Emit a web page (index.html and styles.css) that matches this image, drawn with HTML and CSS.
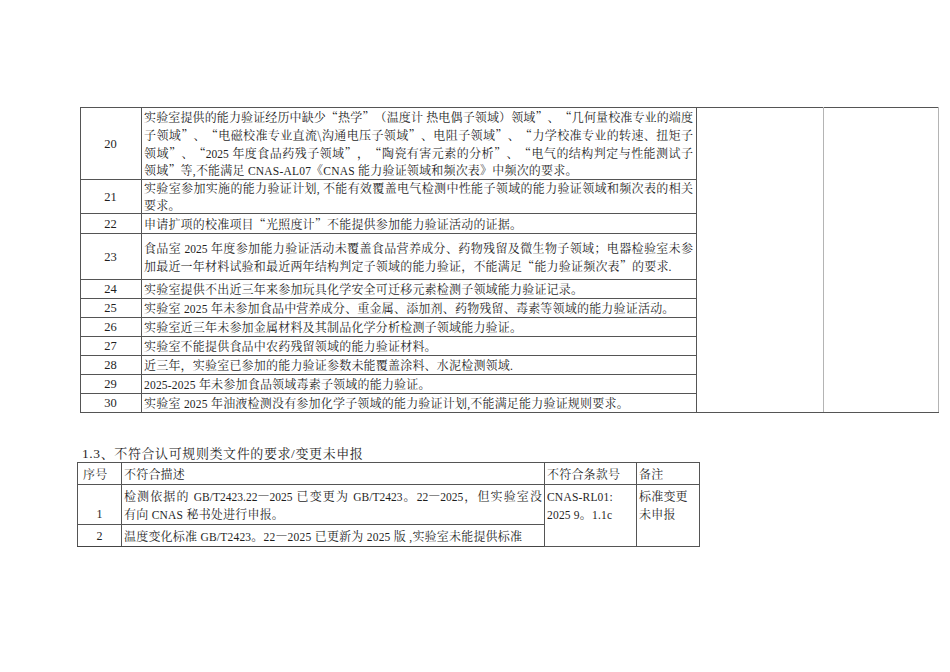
FILE: index.html
```html
<!DOCTYPE html>
<html lang="zh-CN">
<head>
<meta charset="utf-8">
<title>能力验证不符合项</title>
<link rel="stylesheet" href="styles.css">
</head>
<body>
<div class="page">
  <table class="t1">
    <colgroup>
      <col class="w-num"><col class="w-desc"><col class="w-c3"><col class="w-c4">
    </colgroup>
    <tr class="r20">
      <td class="num">20</td>
      <td class="desc"><span class="jl">实验室提供的能力验证经历中缺少“热学”（温度计 热电偶子领域）领域”、“几何量校准专业的端度</span><span class="jl">子领域”、“电磁校准专业直流\沟通电压子领域”、电阻子领域”、“力学校准专业的转速、扭矩子</span><span class="jl">领域”、“<span class="en">2025</span> 年度食品药残子领域”，“陶瓷有害元素的分析”、“电气的结构判定与性能测试子</span><span class="ln">领域”等<span class="en">,</span>不能满足 <span class="en">CNAS-AL07</span>《<span class="en">CNAS</span> 能力验证领域和频次表》中频次的要求。</span></td>
      <td class="c3" rowspan="11"></td>
      <td class="c4" rowspan="11"></td>
    </tr>
    <tr class="r21">
      <td class="num">21</td>
      <td class="desc"><span class="jl">实验室参加实施的能力验证计划<span class="en">, </span>不能有效覆盖电气检测中性能子领域的能力验证领域和频次表的相关</span><span class="ln">要求。</span></td>
    </tr>
    <tr class="r22">
      <td class="num">22</td>
      <td class="desc"><span class="ln">申请扩项的校准项目“光照度计”不能提供参加能力验证活动的证据。</span></td>
    </tr>
    <tr class="r23">
      <td class="num">23</td>
      <td class="desc"><span class="jl">食品室 <span class="en">2025</span> 年度参加能力验证活动未覆盖食品营养成分、药物残留及微生物子领域；电器检验室未参</span><span class="ln">加最近一年材料试验和最近两年结构判定子领域的能力验证，不能满足“能力验证频次表”的要求<span class="en">.</span></span></td>
    </tr>
    <tr class="r1">
      <td class="num">24</td>
      <td class="desc"><span class="ln">实验室提供不出近三年来参加玩具化学安全可迁移元素检测子领域能力验证记录。</span></td>
    </tr>
    <tr class="r1">
      <td class="num">25</td>
      <td class="desc"><span class="ln">实验室 <span class="en">2025</span> 年未参加食品中营养成分、重金属、添加剂、药物残留、毒素等领域的能力验证活动。</span></td>
    </tr>
    <tr class="r1">
      <td class="num">26</td>
      <td class="desc"><span class="ln">实验室近三年未参加金属材料及其制品化学分析检测子领域能力验证。</span></td>
    </tr>
    <tr class="r1">
      <td class="num">27</td>
      <td class="desc"><span class="ln">实验室不能提供食品中农药残留领域的能力验证材料。</span></td>
    </tr>
    <tr class="r1">
      <td class="num">28</td>
      <td class="desc"><span class="ln">近三年，实验室已参加的能力验证参数未能覆盖涂料、水泥检测领域<span class="en">.</span></span></td>
    </tr>
    <tr class="r1">
      <td class="num">29</td>
      <td class="desc"><span class="ln"><span class="en">2025-2025</span> 年未参加食品领域毒素子领域的能力验证。</span></td>
    </tr>
    <tr class="r1">
      <td class="num">30</td>
      <td class="desc"><span class="ln">实验室 <span class="en">2025</span> 年油液检测没有参加化学子领域的能力验证计划<span class="en">,</span>不能满足能力验证规则要求。</span></td>
    </tr>
  </table>

  <h2 class="section"><span class="en">1.3</span>、不符合认可规则类文件的要求<span class="en">/</span>变更未申报</h2>

  <table class="t2">
    <colgroup>
      <col class="w2-num"><col class="w2-desc"><col class="w2-c3"><col class="w2-c4">
    </colgroup>
    <tr class="h">
      <td class="hnum"><span class="ln">序号</span></td>
      <td><span class="ln">不符合描述</span></td>
      <td><span class="ln">不符合条款号</span></td>
      <td><span class="ln">备注</span></td>
    </tr>
    <tr class="r2a">
      <td class="num2"><span class="ln">1</span></td>
      <td><span class="jl">检测依据的 <span class="en">GB/T2423.22</span>—<span class="en">2025</span> 已变更为 <span class="en">GB/T2423</span>。<span class="en">22</span>—<span class="en">2025</span>，但实验室没</span><span class="ln">有向 <span class="en">CNAS</span> 秘书处进行申报。</span></td>
      <td class="top" rowspan="2"><span class="ln"><span class="en">CNAS-RL01:</span></span><span class="ln"><span class="en">2025 9</span>。<span class="en">1.1c</span></span></td>
      <td class="top" rowspan="2"><span class="ln">标准变更</span><span class="ln">未申报</span></td>
    </tr>
    <tr class="r2b">
      <td class="num2"><span class="ln">2</span></td>
      <td><span class="ln">温度变化标准 <span class="en">GB/T2423</span>。<span class="en">22</span>—<span class="en">2025</span> 已更新为 <span class="en">2025</span> 版 <span class="en">,</span>实验室未能提供标准</span></td>
    </tr>
  </table>
</div>
</body>
</html>
```

FILE: styles.css
```css
html, body {
  margin: 0;
  background: #ffffff;
}

body {
  color: #1f1f1f;
  font-family: "Noto Serif CJK SC", "Noto Sans CJK SC", serif;
  font-size: 12px;
}

.page {
  padding: 107px 0 0 77px;
}

table {
  border-collapse: collapse;
  table-layout: fixed;
}

td {
  border: 1px solid #555555;
  padding: 0 3px 0 2px;
  line-height: 18px;
  vertical-align: middle;
}

.en {
  font-family: "Liberation Serif", serif;
  font-size: 11.5px;
}

.jl, .ln {
  display: block;
  height: 18px;
  line-height: 18px;
  overflow: visible;
  white-space: nowrap;
}

.ln {
  letter-spacing: 0.2px;
}

.jl {
  text-align: justify;
  text-align-last: justify;
}

/* table 1 */
.t1 {
  width: 858px;
  margin-left: 3px;
}

.w-num { width: 61px; }
.w-desc { width: 555px; }
.w-c3 { width: 127px; }
.w-c4 { width: 115px; }

.num {
  text-align: center;
  font-family: "Liberation Serif", serif;
  font-size: 12.5px;
}

.c3 {
  border-right-color: #b4b4b4;
}

.c4 {
  border-left-color: #b4b4b4;
  border-right-color: #b4b4b4;
}

.r20 .jl, .r20 .ln { height: 17.75px; line-height: 17.75px; }
.r21 .jl, .r21 .ln { height: 16.5px; line-height: 16.5px; }
.r22 .ln { height: 19px; line-height: 19px; }
.r23 .desc { padding-top: 5px; padding-bottom: 4px; }

/* section heading */
.section {
  margin: 31px 0 0 0;
  padding-left: 5px;
  height: 18px;
  font-size: 13px;
  font-weight: normal;
  line-height: 18px;
  letter-spacing: 0.6px;
}

.section .en {
  font-size: 13.5px;
  letter-spacing: 0.6px;
}

/* table 2 */
.t2 {
  width: 622px;
}

.w2-num { width: 44px; }
.w2-desc { width: 423px; }
.w2-c3 { width: 92px; }
.w2-c4 { width: 63px; }

.t2 td {
  padding: 2px 2px 1px 2px;
}

.t2 .hnum {
  padding-left: 5px;
}

.num2 {
  text-align: center;
  vertical-align: bottom;
  font-family: "Liberation Serif", serif;
}

.t2 .top {
  vertical-align: top;
}

.t2 .r2b td {
  border-bottom-color: #444444;
}
```
